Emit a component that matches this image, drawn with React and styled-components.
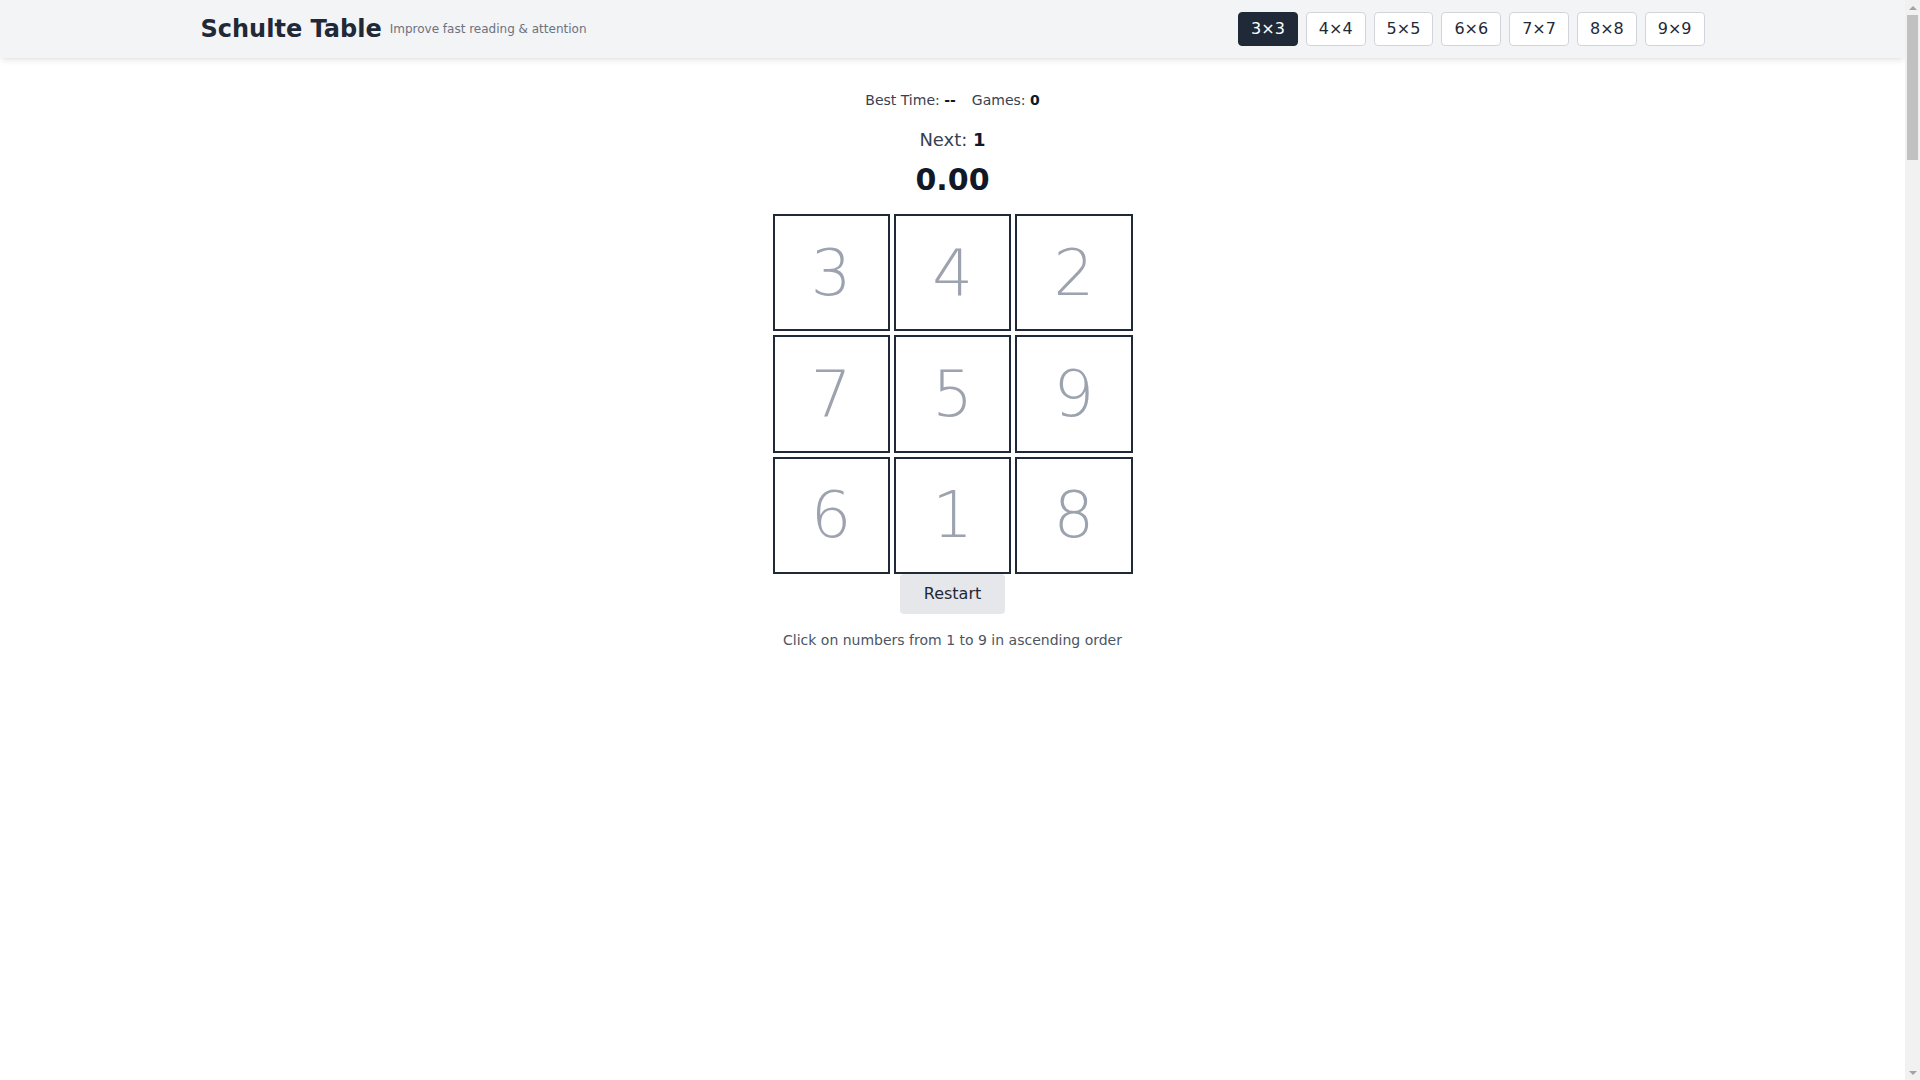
import React, { useState, useEffect, useRef } from "react";
import styled, { createGlobalStyle } from "styled-components";

const GlobalStyle = createGlobalStyle`
  * { box-sizing: border-box; }
  html, body { margin: 0; padding: 0; }
  body {
    font-family: "DejaVu Sans", "Noto Sans", sans-serif;
    background: #ffffff;
    color: #1f2937;
  }
`;

const Page = styled.div`
  min-height: 7820px;
  margin-right: 15px;
  background: #ffffff;
`;

const ScrollTrack = styled.div`
  position: fixed;
  top: 0;
  right: 0;
  width: 15px;
  height: 100vh;
  background: #f1f1f1;
  display: flex;
  flex-direction: column;
  align-items: center;
  justify-content: space-between;
  z-index: 10;
`;

const ScrollArrow = styled.div`
  height: 15px;
  width: 15px;
  display: flex;
  align-items: center;
  justify-content: center;
  &::before {
    content: "";
    width: 0;
    height: 0;
    border-left: 4px solid transparent;
    border-right: 4px solid transparent;
    ${(p) =>
      p.$down
        ? "border-top: 4px solid #a3a3a3;"
        : "border-bottom: 4px solid #a3a3a3;"}
  }
`;

const ScrollBody = styled.div`
  flex: 1;
  width: 100%;
  padding: 0 2px;
`;

const ScrollThumb = styled.div`
  height: 145px;
  background: #c1c1c1;
`;

const Header = styled.header`
  background: #f3f4f6;
  box-shadow: 0 4px 6px -1px rgba(0, 0, 0, 0.08), 0 2px 4px -2px rgba(0, 0, 0, 0.06);
`;

const HeaderInner = styled.div`
  max-width: 1536px;
  margin: 0 auto;
  padding: 12px 16px;
  height: 58px;
  display: flex;
  align-items: center;
  justify-content: space-between;
`;

const Brand = styled.div`
  display: flex;
  align-items: center;
  gap: 8px;
`;

const Title = styled.h1`
  margin: 0;
  font-size: 24px;
  line-height: 32px;
  font-weight: 700;
  color: #1f2937;
`;

const Subtitle = styled.span`
  font-size: 12px;
  line-height: 16px;
  color: #6b7280;
`;

const SizeList = styled.nav`
  display: flex;
  gap: 8px;
`;

const SizeButton = styled.button`
  font-family: inherit;
  font-size: 16px;
  line-height: 24px;
  padding: 4px 12px;
  border-radius: 4px;
  border: 1px solid ${(p) => (p.$active ? "#1f2937" : "#d1d5db")};
  background: ${(p) => (p.$active ? "#1f2937" : "#ffffff")};
  color: ${(p) => (p.$active ? "#ffffff" : "#1f2937")};
  cursor: pointer;
`;

const Main = styled.main`
  display: flex;
  flex-direction: column;
  align-items: center;
  padding-top: 32px;
`;

const Stats = styled.div`
  display: flex;
  gap: 16px;
  font-size: 14px;
  line-height: 20px;
  color: #374151;
  margin-bottom: 16px;
`;

const Strong = styled.b`
  font-weight: 700;
  color: #111827;
`;

const Next = styled.div`
  font-size: 18px;
  line-height: 28px;
  color: #374151;
  margin-bottom: 8px;
`;

const Timer = styled.div`
  font-size: 30px;
  line-height: 36px;
  font-weight: 700;
  color: #111827;
  margin-bottom: 16px;
`;

const Grid = styled.div`
  width: 360px;
  height: 360px;
  display: grid;
  grid-template-columns: repeat(${(p) => p.$n}, 1fr);
  grid-template-rows: repeat(${(p) => p.$n}, 1fr);
  gap: 4px;
`;

const Cell = styled.button`
  font-family: inherit;
  background: #ffffff;
  border: 2px solid #1f2937;
  padding: 0;
  display: flex;
  align-items: center;
  justify-content: center;
  font-size: ${(p) => Math.round(192 / p.$n)}px;
  font-weight: 200;
  color: #9ca3af;
  cursor: pointer;
`;

const RestartButton = styled.button`
  font-family: inherit;
  font-size: 16px;
  line-height: 24px;
  padding: 8px 24px;
  border: none;
  border-radius: 4px;
  background: #e5e7eb;
  color: #1f2937;
  cursor: pointer;
  margin-bottom: 16px;
`;

const Hint = styled.p`
  margin: 0;
  font-size: 14px;
  line-height: 20px;
  color: #4b5563;
`;

const SIZES = [3, 4, 5, 6, 7, 8, 9];
const INITIAL = [3, 4, 2, 7, 5, 9, 6, 1, 8];

function shuffle(n) {
  const arr = Array.from({ length: n * n }, (_, i) => i + 1);
  for (let i = arr.length - 1; i > 0; i--) {
    const j = Math.floor(Math.random() * (i + 1));
    [arr[i], arr[j]] = [arr[j], arr[i]];
  }
  return arr;
}

export default function App() {
  const [size, setSize] = useState(3);
  const [cells, setCells] = useState(INITIAL);
  const [next, setNext] = useState(1);
  const [elapsed, setElapsed] = useState(0);
  const [running, setRunning] = useState(false);
  const [best, setBest] = useState(null);
  const [games, setGames] = useState(0);
  const startRef = useRef(0);

  useEffect(() => {
    if (!running) return;
    const id = setInterval(() => {
      setElapsed((Date.now() - startRef.current) / 1000);
    }, 50);
    return () => clearInterval(id);
  }, [running]);

  const reset = (n) => {
    setCells(shuffle(n));
    setNext(1);
    setElapsed(0);
    setRunning(false);
  };

  const pickSize = (n) => {
    setSize(n);
    reset(n);
  };

  const clickCell = (v) => {
    if (v !== next) return;
    if (v === 1) {
      startRef.current = Date.now();
      setRunning(true);
    }
    if (v === size * size) {
      const t = (Date.now() - startRef.current) / 1000;
      setElapsed(t);
      setRunning(false);
      setGames((g) => g + 1);
      setBest((b) => (b === null || t < b ? t : b));
      setNext(v + 1);
      return;
    }
    setNext(v + 1);
  };

  return (
    <Page>
      <GlobalStyle />
      <Header>
        <HeaderInner>
          <Brand>
            <Title>Schulte Table</Title>
            <Subtitle>Improve fast reading &amp; attention</Subtitle>
          </Brand>
          <SizeList>
            {SIZES.map((n) => (
              <SizeButton key={n} $active={n === size} onClick={() => pickSize(n)}>
                {n}×{n}
              </SizeButton>
            ))}
          </SizeList>
        </HeaderInner>
      </Header>
      <Main>
        <Stats>
          <span>
            Best Time: <Strong>{best === null ? "--" : best.toFixed(2)}</Strong>
          </span>
          <span>
            Games: <Strong>{games}</Strong>
          </span>
        </Stats>
        <Next>
          Next: <Strong>{Math.min(next, size * size)}</Strong>
        </Next>
        <Timer>{elapsed.toFixed(2)}</Timer>
        <Grid $n={size}>
          {cells.map((v) => (
            <Cell key={v} $n={size} onClick={() => clickCell(v)}>
              {v}
            </Cell>
          ))}
        </Grid>
        <RestartButton onClick={() => reset(size)}>Restart</RestartButton>
        <Hint>Click on numbers from 1 to {size * size} in ascending order</Hint>
      </Main>
      <ScrollTrack aria-hidden="true">
        <ScrollArrow />
        <ScrollBody>
          <ScrollThumb />
        </ScrollBody>
        <ScrollArrow $down />
      </ScrollTrack>
    </Page>
  );
}
